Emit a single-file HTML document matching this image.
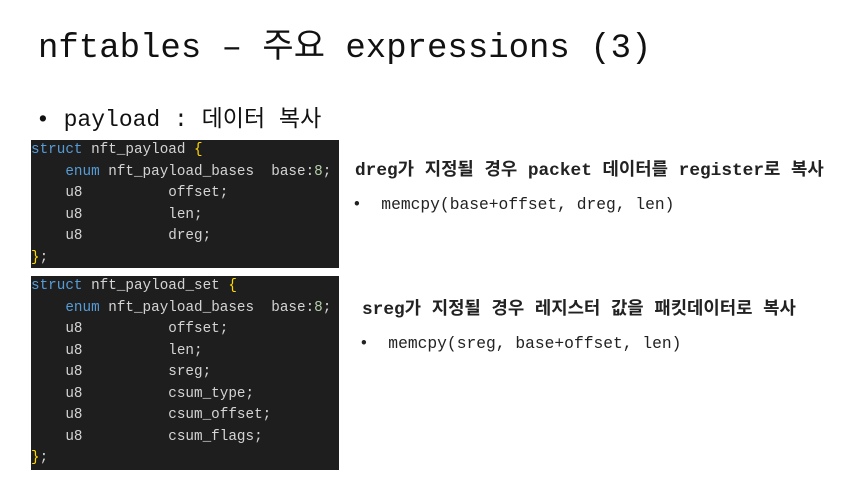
<!DOCTYPE html>
<html><head><meta charset="utf-8"><style>
body{margin:0;width:863px;height:477px;background:#fff;position:relative;overflow:hidden;font-family:"Liberation Mono","Noto Sans CJK KR",monospace;color:#111}
.a{position:absolute;white-space:pre}
.code{position:absolute;left:31px;width:308px;background:#1e1e1e;color:#d4d4d4;font-family:"Liberation Mono",monospace;font-size:14.3px;line-height:21.5px;padding-top:0;white-space:pre}
.k{color:#569cd6}.y{color:#ffd700}.n{color:#b5cea8}
.h{font-weight:bold;font-size:17.8px;color:#222}
.m{font-size:16.3px;color:#222}
</style></head><body>
<div class="a" style="left:38px;top:18px;font-size:34px;">nftables – 주요 expressions (3)</div>
<div class="a" style="left:36px;top:99px;font-size:23px;">• payload : 데이터 복사</div>
<div class="code" style="top:140px;height:128px;"><span class="k">struct</span> nft_payload <span class="y">{</span>
    <span class="k">enum</span> nft_payload_bases  base:<span class="n">8</span>;
    u8          offset;
    u8          len;
    u8          dreg;
<span class="y">}</span>;</div>
<div class="code" style="top:276px;height:194px;"><span class="k">struct</span> nft_payload_set <span class="y">{</span>
    <span class="k">enum</span> nft_payload_bases  base:<span class="n">8</span>;
    u8          offset;
    u8          len;
    u8          sreg;
    u8          csum_type;
    u8          csum_offset;
    u8          csum_flags;
<span class="y">}</span>;</div>
<div class="a h" style="left:355px;top:155px;">dreg가 지정될 경우 packet 데이터를 register로 복사</div>
<div class="a m" style="left:352px;top:195px;">•  memcpy(base+offset, dreg, len)</div>
<div class="a h" style="left:362px;top:294px;">sreg가 지정될 경우 레지스터 값을 패킷데이터로 복사</div>
<div class="a m" style="left:359px;top:334px;">•  memcpy(sreg, base+offset, len)</div>
</body></html>
